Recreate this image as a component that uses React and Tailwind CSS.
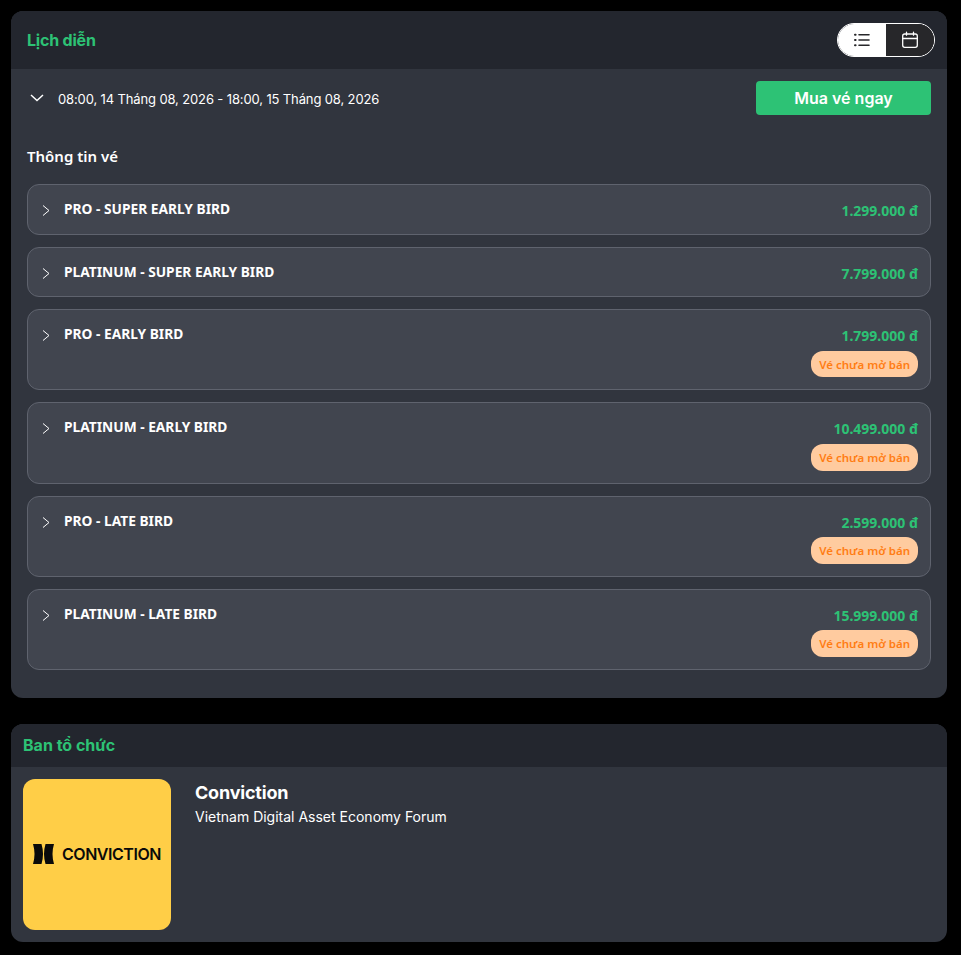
import React from "react";

const tickets = [
  { name: "PRO - SUPER EARLY BIRD", price: "1.299.000 đ" },
  { name: "PLATINUM - SUPER EARLY BIRD", price: "7.799.000 đ" },
  { name: "PRO - EARLY BIRD", price: "1.799.000 đ", closed: true },
  { name: "PLATINUM - EARLY BIRD", price: "10.499.000 đ", closed: true },
  { name: "PRO - LATE BIRD", price: "2.599.000 đ", closed: true },
  { name: "PLATINUM - LATE BIRD", price: "15.999.000 đ", closed: true },
];

function TicketRow({ ticket }) {
  return (
    <div className="flex justify-between rounded-[12px] border border-[#5f636e] bg-[#41454f] px-3 pt-[12px] pb-[11px]">
      <div className="flex items-start">
        <svg className="ml-[1px] mt-[6px] h-[14px] w-[12px]" viewBox="0 0 12 14" fill="none" stroke="#fff" strokeWidth="1">
          <path d="M2 2.500 8 7.500 2 12.500" />
        </svg>
        <span className="ml-[11px] text-[13.750px] leading-[24.800px] font-bold text-white font-['Noto_Sans']">{ticket.name}</span>
      </div>
      <div className="flex flex-col items-end">
        <span className="h-[25.500px] pt-[2px] text-[14px] leading-[23.200px] font-bold text-[#2dc275] font-['Noto_Sans']">{ticket.price}</span>
        {ticket.closed && (
          <span className="mt-[3px] mb-[1px] h-[26.830px] rounded-[12px] bg-[#ffcb9f] px-2 text-[11.500px] leading-[27.500px] font-semibold text-[#ff7d14] font-['Noto_Sans']">Vé chưa mở bán</span>
        )}
      </div>
    </div>
  );
}

export default function App() {
  return (
    <div className="min-h-[955px] bg-black pl-[11px] pr-[14px] pt-[11px] font-['Inter',sans-serif] text-white">
      <div className="overflow-hidden rounded-[12px] bg-[#31353e]">
        <div className="flex h-[58px] items-center justify-between bg-[#23262e] pl-[16px] pr-[12px]">
          <h2 className="text-[16px] font-bold tracking-[-0.2px] text-[#2dc275]">Lịch diễn</h2>
          <div className="flex h-[34px] w-[98px] overflow-hidden rounded-full border border-white">
            <div className="flex flex-1 items-center justify-center bg-white">
              <svg className="h-[18px] w-[18px]" viewBox="0 0 18 18" fill="none" stroke="#27272a" strokeWidth="1.6" strokeLinecap="round">
                <path d="M6 3.700h10M6 9h10M6 14.300h10" />
                <path d="M2 3.700h.6M2 9h.6M2 14.300h.6" strokeWidth="2" />
              </svg>
            </div>
            <div className="flex flex-1 items-center justify-center bg-[#27272a]">
              <svg className="h-[18px] w-[18px]" viewBox="0 0 18 18" fill="none" stroke="#fff" strokeWidth="1.3" strokeLinecap="round">
                <rect x="1.700" y="3" width="14.600" height="13.300" rx="2" />
                <path d="M1.700 7.500h14.600M5.500 1.200v3M12.500 1.200v3" />
              </svg>
            </div>
          </div>
        </div>
        <div className="px-4 pt-3 pb-7">
          <div className="flex items-center justify-between">
            <div className="flex items-center">
              <svg className="ml-[3px] h-[14px] w-[14px]" viewBox="0 0 14 14" fill="none" stroke="#fff" strokeWidth="1.5">
                <path d="M1 4 7 9.500 13 4" />
              </svg>
              <span className="ml-[14px] mt-[3px] text-[13px] tracking-[-0.130px] text-white">08:00, 14 Tháng 08, 2026 - 18:00, 15 Tháng 08, 2026</span>
            </div>
            <button className="h-[34px] w-[175px] rounded-[4px] bg-[#2dc275] text-[16px] font-semibold text-white">Mua vé ngay</button>
          </div>
          <h3 className="mt-[29px] text-[15px] leading-[24px] font-semibold text-white font-['Noto_Sans']">Thông tin vé</h3>
          <div className="mt-[16px] flex flex-col gap-3">
            {tickets.map((t) => (
              <TicketRow key={t.name} ticket={t} />
            ))}
          </div>
        </div>
      </div>
      <div className="mt-[26px] overflow-hidden rounded-[12px] bg-[#31353e]">
        <div className="flex h-[43px] items-center bg-[#23262e] px-3 pb-[2px]">
          <h2 className="text-[16px] font-bold text-[#2dc275]">Ban tổ chức</h2>
        </div>
        <div className="flex gap-6 p-3">
          <div className="flex h-[151px] w-[148px] items-center justify-center gap-2 rounded-[12px] bg-[#ffce47] pb-[2px]">
            <svg className="h-[20px] w-[21px]" viewBox="0 0 21 20" fill="#0a0a0a">
              <path d="M0 0h8.500q1.500 5 1.500 10t-1.500 10H0q1.500-5 1.500-10T0 0Z" />
              <path d="M21 0h-8.500q-1.500 5-1.500 10t1.500 10H21q-1.500-5-1.500-10T21 0Z" />
            </svg>
            <span className="text-[16px] font-semibold tracking-[-0.450px] text-[#0a0a0a]">CONVICTION</span>
          </div>
          <div>
            <div className="text-[18px] leading-[28px] font-bold tracking-[-0.2px] text-white">Conviction</div>
            <div className="text-[14px] leading-[20px] text-white">Vietnam Digital Asset Economy Forum</div>
          </div>
        </div>
      </div>
    </div>
  );
}
